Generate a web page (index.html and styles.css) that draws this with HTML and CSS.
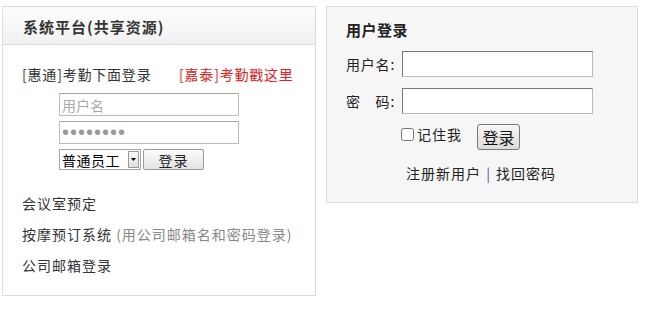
FILE: index.html
```html
<!DOCTYPE html>
<html lang="zh-CN">
<head>
    <meta charset="UTF-8">
    <title>系统平台</title>
    <link rel="stylesheet" href="styles.css">
</head>
<body>
    <div class="page">
        <div class="box platform">
            <div class="box-head">系统平台(共享资源)</div>
            <div class="box-body">
                <p class="kq-line">
                    <span class="kq-ht">[惠通]考勤下面登录</span>
                    <a class="kq-jt" href="#">[嘉泰]考勤戳这里</a>
                </p>
                <form class="kq-form">
                    <input class="kq-input" type="text" placeholder="用户名">
                    <input class="kq-input pwd" type="password" value="12345678">
                    <div class="kq-row">
                        <div class="fake-select">
                            <span>普通员工</span>
                            <span class="arrow"><svg width="5" height="3" viewBox="0 0 5 3"><path d="M0 0h5L2.5 3z" fill="#000"/></svg></span>
                        </div>
                        <button class="kq-btn" type="button">登录</button>
                    </div>
                </form>
                <ul class="links">
                    <li><a href="#">会议室预定</a></li>
                    <li><a href="#">按摩预订系统</a> <span class="note">(用公司邮箱名和密码登录)</span></li>
                    <li><a href="#">公司邮箱登录</a></li>
                </ul>
            </div>
        </div>

        <div class="box login">
            <h3>用户登录</h3>
            <div class="field">
                <label>用户名:</label>
                <input type="text">
            </div>
            <div class="field">
                <label>密&emsp;码:</label>
                <input type="password">
            </div>
            <div class="remember">
                <label><input type="checkbox"> 记住我</label>
                <button type="button" class="login-btn">登录</button>
            </div>
            <div class="extra">
                <a href="#">注册新用户</a> <span class="sep">|</span> <a href="#">找回密码</a>
            </div>
        </div>
    </div>
</body>
</html>
```

FILE: styles.css
```css
body {
    margin: 0;
    font-family: "Noto Sans CJK SC", "Liberation Sans", sans-serif;
    font-size: 14px;
    letter-spacing: 1px;
    color: #333;
    background: #fff;
}

a {
    color: #333;
    text-decoration: none;
}

.page {
    display: flex;
    align-items: flex-start;
    gap: 10px;
    padding: 6px 0 0 2px;
}

.box {
    border: 1px solid #dcdcdc;
    box-sizing: border-box;
}

/* left panel */
.platform {
    width: 314px;
    height: 290px;
    background: #fff;
}

.box-head {
    height: 37px;
    line-height: 40px;
    padding-left: 20px;
    font-size: 15px;
    letter-spacing: 1px;
    font-weight: bold;
    color: #333;
    background: linear-gradient(#fdfdfd, #f1f1f1);
    border-bottom: 1px solid #dcdcdc;
}

.box-body {
    padding: 0 0 0 19px;
}

.kq-line {
    margin: 19px 0 0;
    height: 20px;
    line-height: 20px;
    display: flex;
}

.kq-ht {
    width: 157px;
    letter-spacing: 0.8px;
}

.kq-jt {
    color: #e02020;
    letter-spacing: 0.8px;
}

.kq-form {
    margin: 9px 0 0 37px;
}

.kq-input {
    display: block;
    width: 180px;
    height: 23px;
    box-sizing: border-box;
    border: 1px solid #bcbcbc;
    border-top-color: #a8a8a8;
    margin: 0 0 5px;
    padding: 0 2px;
    font-family: inherit;
    font-size: 14px;
    color: #999;
}

.kq-input::placeholder {
    color: #aaa;
}

.kq-input.pwd {
    font-family: "Liberation Sans", sans-serif;
    font-size: 20px;
    letter-spacing: 1px;
    color: #9a9a9a;
}

.kq-row {
    display: flex;
    gap: 2px;
}

.fake-select {
    display: flex;
    align-items: center;
    width: 82px;
    height: 21px;
    box-sizing: border-box;
    border: 1px solid #a5a5a5;
    padding-left: 2px;
    font-size: 14px;
    letter-spacing: 0.5px;
    color: #000;
    background: #fff;
}

.fake-select span:first-child {
    flex: 1;
    white-space: nowrap;
}

.fake-select .arrow {
    width: 11px;
    height: 17px;
    margin-right: 1px;
    border: 1px solid #9a9a9a;
    box-sizing: border-box;
    background: linear-gradient(#fafafa, #dedede);
    display: flex;
    align-items: center;
    justify-content: center;
}

.kq-btn {
    width: 61px;
    height: 21px;
    padding: 0;
    border: 1px solid #9a9a9a;
    border-radius: 2px;
    background: linear-gradient(#fbfbfb, #e3e3e3);
    font-family: inherit;
    font-size: 14px;
    letter-spacing: 1px;
    color: #222;
}

.links {
    list-style: none;
    margin: 22px 0 0;
    padding: 0;
}

.links li {
    height: 31px;
    line-height: 22px;
}

.note {
    color: #888;
}

/* right panel */
.login {
    width: 312px;
    height: 197px;
    background: #f6f6f6;
    padding: 10px 0 0 19px;
}

.login h3 {
    margin: 0;
    height: 26px;
    line-height: 26px;
    font-size: 15px;
    letter-spacing: 0.5px;
    font-weight: bold;
    color: #222;
}

.field {
    display: flex;
    align-items: center;
    margin-top: 8px;
    height: 26px;
}

.field + .field {
    margin-top: 11px;
}

.field label {
    width: 56px;
    color: #222;
    white-space: nowrap;
    letter-spacing: 0.8px;
}

.field input {
    width: 191px;
    height: 26px;
    box-sizing: border-box;
    border: 1px solid #bbb;
    border-top-color: #777;
    border-left-color: #777;
    background: #fff;
    margin: 0;
}

.remember {
    display: flex;
    align-items: flex-start;
    margin: 10px 0 0 55px;
    height: 28px;
}

.remember label {
    display: flex;
    align-items: center;
    width: 76px;
    color: #222;
}

.remember input {
    margin: 0 3px 0 0;
    width: 13px;
    height: 13px;
}

.login-btn {
    width: 43px;
    height: 26px;
    padding: 0;
    border: 1px solid #777;
    border-radius: 3px;
    background: linear-gradient(#f6f6f6, #dcdcdc);
    font-family: inherit;
    font-size: 16px;
    letter-spacing: 0;
    color: #111;
}

.extra {
    margin: 11px 0 0 60px;
    color: #222;
}

.extra a {
    color: #222;
}

.sep {
    color: #3a5ba0;
    margin: 0 1px;
}
```
